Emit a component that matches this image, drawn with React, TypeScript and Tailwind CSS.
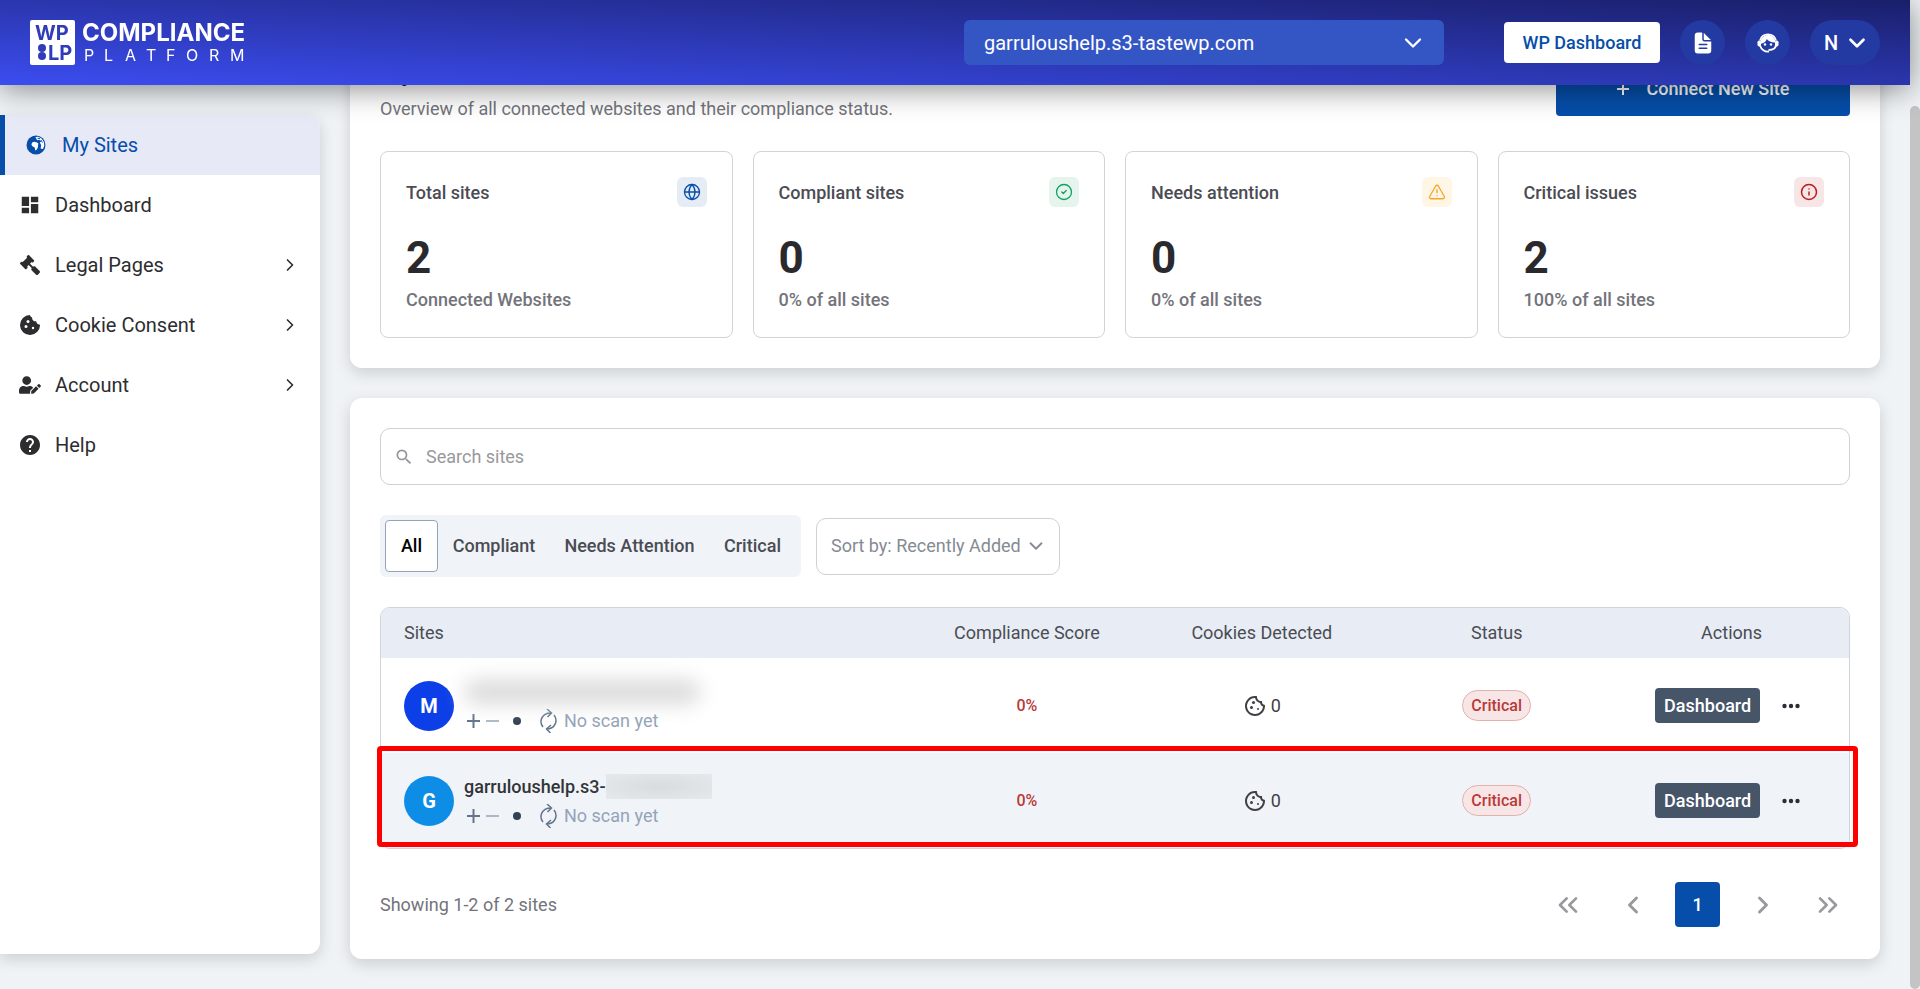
import type { ReactNode } from 'react';
import { FaGavel, FaUserEdit } from 'react-icons/fa';
import { FiChevronDown, FiChevronLeft, FiChevronRight } from 'react-icons/fi';
import { IoDocumentText } from 'react-icons/io5';
import {
	MdDashboard,
	MdHelp,
	MdOutlineCookie,
	MdSearch,
} from 'react-icons/md';
import {
	ChevronsLeft,
	ChevronsRight,
	CircleCheck,
	Globe,
	Info,
	TriangleAlert,
} from 'lucide-react';

function Logo() {
	return (
		<svg
			role="img"
			aria-label="WP LP Compliance Platform"
			viewBox="0 -5 220 56"
			className="h-14 w-[220px] font-[Inter,sans-serif]"
		>
			<rect width="45" height="45" rx="2" fill="#fff" />
			<g fill="#303cba" fontWeight="700" fontSize="20">
				<text x="5" y="20">
					WP
				</text>
				<text x="18" y="40">
					LP
				</text>
				<circle cx="12" cy="28" r="4" />
				<circle cx="12" cy="36" r="4" />
			</g>
			<g fill="#fff">
				<text x="52" y="21" fontWeight="700" fontSize="24">
					COMPLIANCE
				</text>
				<text x="54 74 95 116 136 156 179 200" y="41" fontSize="16">
					PLATFORM
				</text>
			</g>
		</svg>
	);
}

function SupportIcon() {
	return (
		<svg
			aria-hidden="true"
			viewBox="0 0 22 20"
			className="h-5 w-[22px]"
			fill="none"
			stroke="currentColor"
		>
			<path
				d="M19 7.500A8.300 8.300 0 0 0 3 7.500M3 12.500a8.300 8.300 0 0 0 9 6"
				strokeWidth="1.800"
			/>
			<path
				d="M3.200 11C7 10.500 9 8.500 9.800 6c1.800 2.500 4.700 3.600 8.700 3.400C18 4.500 15 2 11 2S3.500 5 3.200 11z"
				fill="currentColor"
				stroke="none"
			/>
			<rect
				x="0.500"
				y="7.500"
				width="3.500"
				height="6"
				rx="1.700"
				fill="currentColor"
				stroke="none"
			/>
			<rect
				x="18"
				y="7.500"
				width="3.500"
				height="6"
				rx="1.700"
				fill="currentColor"
				stroke="none"
			/>
			<path d="M19 11.500c0 4-2.500 5.500-7.500 5.500" strokeWidth="2" />
			<circle cx="8" cy="11.500" r="1.200" fill="currentColor" stroke="none" />
			<circle cx="14" cy="11.500" r="1.200" fill="currentColor" stroke="none" />
		</svg>
	);
}

function Header() {
	return (
		<header className="fixed top-0 right-[10px] left-0 z-20 flex h-[85px] items-center bg-linear-to-tr/srgb from-[#3b4df0] to-[#1a1f6a] pr-[30px] pl-[30px] shadow-[0_4px_30px_rgba(0,0,0,0.45)]">
			<Logo />
			<button
				type="button"
				className="ml-auto flex h-[45px] w-[480px] items-center justify-between rounded-md bg-[#3456c4] pr-[17px] pl-5 text-white text-xl"
			>
				garruloushelp.s3-tastewp.com
				<FiChevronDown className="size-7" />
			</button>
			<a
				href="#wp"
				className="ml-[60px] flex h-[41px] w-[156px] items-center justify-center rounded bg-white font-medium text-[#064ea9] text-lg"
			>
				WP Dashboard
			</a>
			<div className="ml-5 flex gap-5 text-white">
				<button
					type="button"
					aria-label="Documents"
					className="flex size-[45px] items-center justify-center rounded-full bg-[#233aa2]"
				>
					<IoDocumentText className="size-6" />
				</button>
				<button
					type="button"
					aria-label="Support"
					className="flex size-[45px] items-center justify-center rounded-full bg-[#233aa2]"
				>
					<SupportIcon />
				</button>
				<button
					type="button"
					className="flex h-[45px] w-[70px] items-center justify-center gap-[6px] rounded-full bg-[#233aa2] pl-1 font-medium text-xl"
				>
					N
					<FiChevronDown className="size-[26px]" strokeWidth={2.5} />
				</button>
			</div>
		</header>
	);
}

function EarthIcon() {
	return (
		<svg aria-hidden="true" viewBox="0 0 20 20" className="size-5">
			<circle cx="10" cy="10" r="9.500" fill="currentColor" />
			<path
				d="M6.200 7.600 8.500 6.700 11 7.400 12.400 8.600 12 10.200 11.900 12.600 10.600 14.800 9.200 15.600 8.700 12.400 6.400 11.300 5.400 9.400zM9.400 2.100 12.200 1.700 15.500 3.600 17.900 7 18.300 10.600 17 14 14.600 13.400 15.200 10.200 13.800 7.600 15.400 6.600 13.400 4.800 11.200 5.200z"
				fill="#fff"
			/>
			<path
				d="M11.500 3.200 14 3.700M14.800 5l1.700 2.500"
				stroke="currentColor"
				strokeWidth="1"
			/>
		</svg>
	);
}

function CookieIcon() {
	return (
		<svg aria-hidden="true" viewBox="0 0 20 20" className="size-5">
			<path
				d="M10 0a10 10 0 1 0 10 9.600 3.300 3.300 0 0 1-3.800-3.300 3.500 3.500 0 0 1-4.100-3.900C10.800 2 10.100 1.200 10 0z"
				fill="currentColor"
			/>
			<g fill="#fff">
				<circle cx="8" cy="6.500" r="1.500" />
				<circle cx="6" cy="11.500" r="1.500" />
				<circle cx="13" cy="13" r="1.200" />
			</g>
		</svg>
	);
}

type NavItem = { label: string; icon: ReactNode; expandable?: boolean };

const navItems: NavItem[] = [
	{ label: 'Dashboard', icon: <MdDashboard className="size-[22px]" /> },
	{
		label: 'Legal Pages',
		icon: <FaGavel className="size-5 -scale-x-100" />,
		expandable: true,
	},
	{
		label: 'Cookie Consent',
		icon: <CookieIcon />,
		expandable: true,
	},
	{
		label: 'Account',
		icon: <FaUserEdit className="size-[22px]" />,
		expandable: true,
	},
	{ label: 'Help', icon: <MdHelp className="size-6" /> },
];

function Sidebar() {
	return (
		<nav className="mt-[115px] flex h-[calc(100vh-150px)] w-80 shrink-0 flex-col overflow-hidden rounded-r-xl bg-white text-[#2d2d30] text-xl shadow-[0_5px_15px_rgba(0,0,0,0.15)]">
			<a
				href="#sites"
				className="flex h-[60px] items-center gap-4 border-[#064ea9] border-l-[5px] bg-[#e7e9f7] pl-[21px] text-[#064ea9]"
			>
				<EarthIcon />
				My Sites
			</a>
			{navItems.map((item) => (
				<a
					key={item.label}
					href="#nav"
					className="flex h-[60px] items-center gap-[13px] pr-5 pl-[18px]"
				>
					<span className="flex w-6 justify-center">{item.icon}</span>
					{item.label}
					{item.expandable && <FiChevronRight className="ml-auto size-5" />}
				</a>
			))}
		</nav>
	);
}

type StatProps = {
	title: string;
	value: string;
	note: string;
	tone: string;
	icon: ReactNode;
};

const stats: StatProps[] = [
	{
		title: 'Total sites',
		value: '2',
		note: 'Connected Websites',
		tone: 'bg-[#e6ecf6] text-[#064ea9]',
		icon: <Globe className="size-[18px]" strokeWidth={1.75} />,
	},
	{
		title: 'Compliant sites',
		value: '0',
		note: '0% of all sites',
		tone: 'bg-[#e5f5ee] text-[#14a05f]',
		icon: <CircleCheck className="size-[18px]" strokeWidth={1.75} />,
	},
	{
		title: 'Needs attention',
		value: '0',
		note: '0% of all sites',
		tone: 'bg-[#fff6e6] text-[#f5a623]',
		icon: <TriangleAlert className="size-[18px]" strokeWidth={1.75} />,
	},
	{
		title: 'Critical issues',
		value: '2',
		note: '100% of all sites',
		tone: 'bg-[#f8e5e5] text-[#b91c1c]',
		icon: <Info className="size-[18px]" />,
	},
];

function Stat({ title, value, note, tone, icon }: StatProps) {
	return (
		<div className="h-[187px] rounded-lg border border-[#d2d3d6] px-[25px] pt-[25px]">
			<div className="flex items-start justify-between">
				<h2 className="font-medium text-[#4b4c53] text-lg leading-8">{title}</h2>
				<span
					className={`flex size-[30px] items-center justify-center rounded-md ${tone}`}
				>
					{icon}
				</span>
			</div>
			<p className="mt-[22px] font-bold text-[#2a2a2e] text-[44px] leading-[54px]">
				{value}
			</p>
			<p className="mt-[3px] font-medium text-[#73747b] text-lg leading-6">
				{note}
			</p>
		</div>
	);
}

function ScanIcon() {
	return (
		<svg
			aria-hidden="true"
			viewBox="0 0 20 24"
			className="h-6 w-5"
			fill="none"
			stroke="#64748b"
			strokeWidth="1.5"
		>
			<path d="M4 18C0 13 2 4 12 4M8 0l4.500 4-4 4M15 6c4 5 2 14-8 14M12 16l-4.500 4 4 4" />
		</svg>
	);
}

type Site = {
	letter: string;
	avatar: string;
	name?: string;
	highlighted?: boolean;
};

const sites: Site[] = [
	{ letter: 'M', avatar: 'bg-[#0d3fe8]' },
	{
		letter: 'G',
		avatar: 'bg-[#0e8de6]',
		name: 'garruloushelp.s3-',
		highlighted: true,
	},
];

function SiteRow({ letter, avatar, name, highlighted }: Site) {
	return (
		<tr className={highlighted ? 'h-[95px] bg-[#f0f4f9]' : 'h-[95px]'}>
			<td className="pl-[23px]">
				<div className="flex items-center gap-[10px]">
					<span
						className={`flex size-[50px] items-center justify-center rounded-full font-bold text-white text-xl ${avatar}`}
					>
						{letter}
					</span>
					<div>
						{name ? (
							<div className="flex h-[30px] items-center font-medium text-[#333437] text-lg">
								{name}
								<span className="h-[25px] w-[106px] bg-[radial-gradient(ellipse,#d8dcdf,#e5e9ec)]" />
							</div>
						) : (
							<div className="flex h-[30px] items-center">
								<span className="h-6 w-[236px] rounded-full bg-[#dadada] blur-[10px]" />
							</div>
						)}
						<div className="flex h-7 items-center text-[#94a3b8] text-lg">
							<svg
								aria-hidden="true"
								viewBox="0 0 32 14"
								className="ml-[3px] h-[14px] w-8"
							>
								<path d="M0 7h13M6.500 0v14" stroke="#64748b" strokeWidth="2" />
								<path d="M19 7h13" stroke="#94a3b8" strokeWidth="1.500" />
							</svg>
							<span className="ml-[14px] size-2 rounded-full bg-[#334155]" />
							<span className="ml-[18px] flex items-center gap-[5px]">
								<ScanIcon />
								No scan yet
							</span>
						</div>
					</div>
				</div>
			</td>
			<td className="text-center font-medium text-[#b93a3a] text-base">0%</td>
			<td>
				<div className="flex items-center justify-center gap-1 text-[#3f4045] text-lg">
					<MdOutlineCookie className="size-6" />0
				</div>
			</td>
			<td className="text-center">
				<span className="inline-flex h-[31px] w-[69px] items-center justify-center rounded-full border border-[#e3b0b0] bg-[#f8e5e5] font-medium text-[#b93a3a] text-base">
					Critical
				</span>
			</td>
			<td>
				<div className="flex items-center pl-[41px]">
					<button
						type="button"
						className="h-[35px] w-[105px] rounded bg-[#475569] font-medium text-lg text-white"
					>
						Dashboard
					</button>
					<button type="button" aria-label="More" className="ml-5 p-[2px]">
						<svg
							aria-hidden="true"
							viewBox="0 0 18 6"
							className="h-[6px] w-[18px]"
							fill="#2d2d35"
						>
							<circle cx="2.500" cy="3" r="2.200" />
							<circle cx="9" cy="3" r="2.200" />
							<circle cx="15.500" cy="3" r="2.200" />
						</svg>
					</button>
				</div>
			</td>
		</tr>
	);
}

function Overview() {
	return (
		<section className="rounded-xl bg-white p-[30px] shadow-[0_5px_15px_rgba(0,0,0,0.15)]">
			<div className="flex items-center justify-between">
				<div>
					<h1 className="font-bold text-2xl text-[#0f1b5c] leading-8">
						My Sites
					</h1>
					<p className="mt-2 text-[#73747b] text-lg leading-6">
						Overview of all connected websites and their compliance status.
					</p>
				</div>
				<button
					type="button"
					className="flex h-[54px] w-[294px] items-center justify-center gap-[18px] rounded bg-[#064ea9] font-medium text-lg text-white"
				>
					<svg
						aria-hidden="true"
						viewBox="0 0 12 12"
						className="size-3"
						stroke="#fff"
						strokeWidth="2"
					>
						<path d="M0 6h12M6 0v12" />
					</svg>
					Connect New Site
				</button>
			</div>
			<div className="mt-[30px] grid grid-cols-4 gap-5">
				{stats.map((stat) => (
					<Stat key={stat.title} {...stat} />
				))}
			</div>
		</section>
	);
}

const pageButton = 'flex size-[45px] items-center justify-center';

function SiteList() {
	return (
		<section className="rounded-xl bg-white px-[30px] pt-[30px] pb-8 shadow-[0_5px_15px_rgba(0,0,0,0.15)]">
			<label className="flex h-[57px] items-center gap-3 rounded-[10px] border border-[#cfd0d2] px-[13px]">
				<MdSearch className="size-5 text-[#94959a]" />
				<input
					type="search"
					aria-label="Search sites"
					placeholder="Search sites"
					className="flex-1 text-lg outline-none placeholder:text-[#98999c]"
				/>
			</label>
			<div className="mt-[30px] flex items-center gap-[15px]">
				<div className="flex h-[62px] items-center rounded-md bg-[#f0f4f9] px-[5px] font-medium text-[#4b4c53] text-lg">
					<button
						type="button"
						className="h-[52px] w-[53px] rounded border border-[#94a3b8] bg-white text-black"
					>
						All
					</button>
					<button type="button" className="w-[112px]">
						Compliant
					</button>
					<button type="button" className="w-[159px]">
						Needs Attention
					</button>
					<button type="button" className="w-[87px]">
						Critical
					</button>
				</div>
				<button
					type="button"
					className="flex h-[57px] items-center gap-1 rounded-[10px] border border-[#cfd0d2] pr-3 pl-[14px] text-[#858b93] text-lg"
				>
					Sort by: Recently Added
					<FiChevronDown className="size-[22px]" />
				</button>
			</div>
			<div className="relative mt-[30px]">
				<div className="overflow-hidden rounded-[10px] border border-[#cfd3da]">
					<table className="w-full table-fixed">
						<thead className="bg-[#e7ecf5] text-[#4b4c53] text-lg">
							<tr className="h-[50px]">
								<th className="pl-[23px] text-left font-normal">Sites</th>
								<th className="w-[16%] font-normal">Compliance Score</th>
								<th className="w-[16%] font-normal">Cookies Detected</th>
								<th className="w-[16%] font-normal">Status</th>
								<th className="w-[16%] font-normal">Actions</th>
							</tr>
						</thead>
						<tbody>
							{sites.map((site) => (
								<SiteRow key={site.letter} {...site} />
							))}
						</tbody>
					</table>
				</div>
				<div className="pointer-events-none absolute -right-2 bottom-[2px] -left-[3px] h-[101px] rounded-sm border-5 border-[#ff0000]" />
			</div>
			<div className="mt-[33px] flex items-center justify-between text-[#73747b] text-lg">
				<p>Showing 1-2 of 2 sites</p>
				<div className="flex gap-5 text-[#98999c]">
					<button type="button" aria-label="First page" className={pageButton}>
						<ChevronsLeft className="size-8" strokeWidth={2} />
					</button>
					<button
						type="button"
						aria-label="Previous page"
						className={pageButton}
					>
						<FiChevronLeft className="size-7" strokeWidth={2.5} />
					</button>
					<button
						type="button"
						className="flex size-[45px] items-center justify-center rounded bg-[#064ea9] font-medium text-white"
					>
						1
					</button>
					<button type="button" aria-label="Next page" className={pageButton}>
						<FiChevronRight className="size-7" strokeWidth={2.5} />
					</button>
					<button type="button" aria-label="Last page" className={pageButton}>
						<ChevronsRight className="size-8" strokeWidth={2} />
					</button>
				</div>
			</div>
		</section>
	);
}

export default function App() {
	return (
		<div className="h-screen overflow-hidden bg-[#eff3f6] font-[Roboto,sans-serif]">
			<Header />
			<div className="flex items-start gap-[30px] pr-10">
				<Sidebar />
				<main className="flex min-w-0 flex-1 flex-col gap-[30px] pt-[27px] pb-[30px]">
					<Overview />
					<SiteList />
				</main>
			</div>
			<div className="fixed top-[106px] right-0 bottom-0 w-[10px] rounded-full bg-[#c4c4c4]" />
		</div>
	);
}
